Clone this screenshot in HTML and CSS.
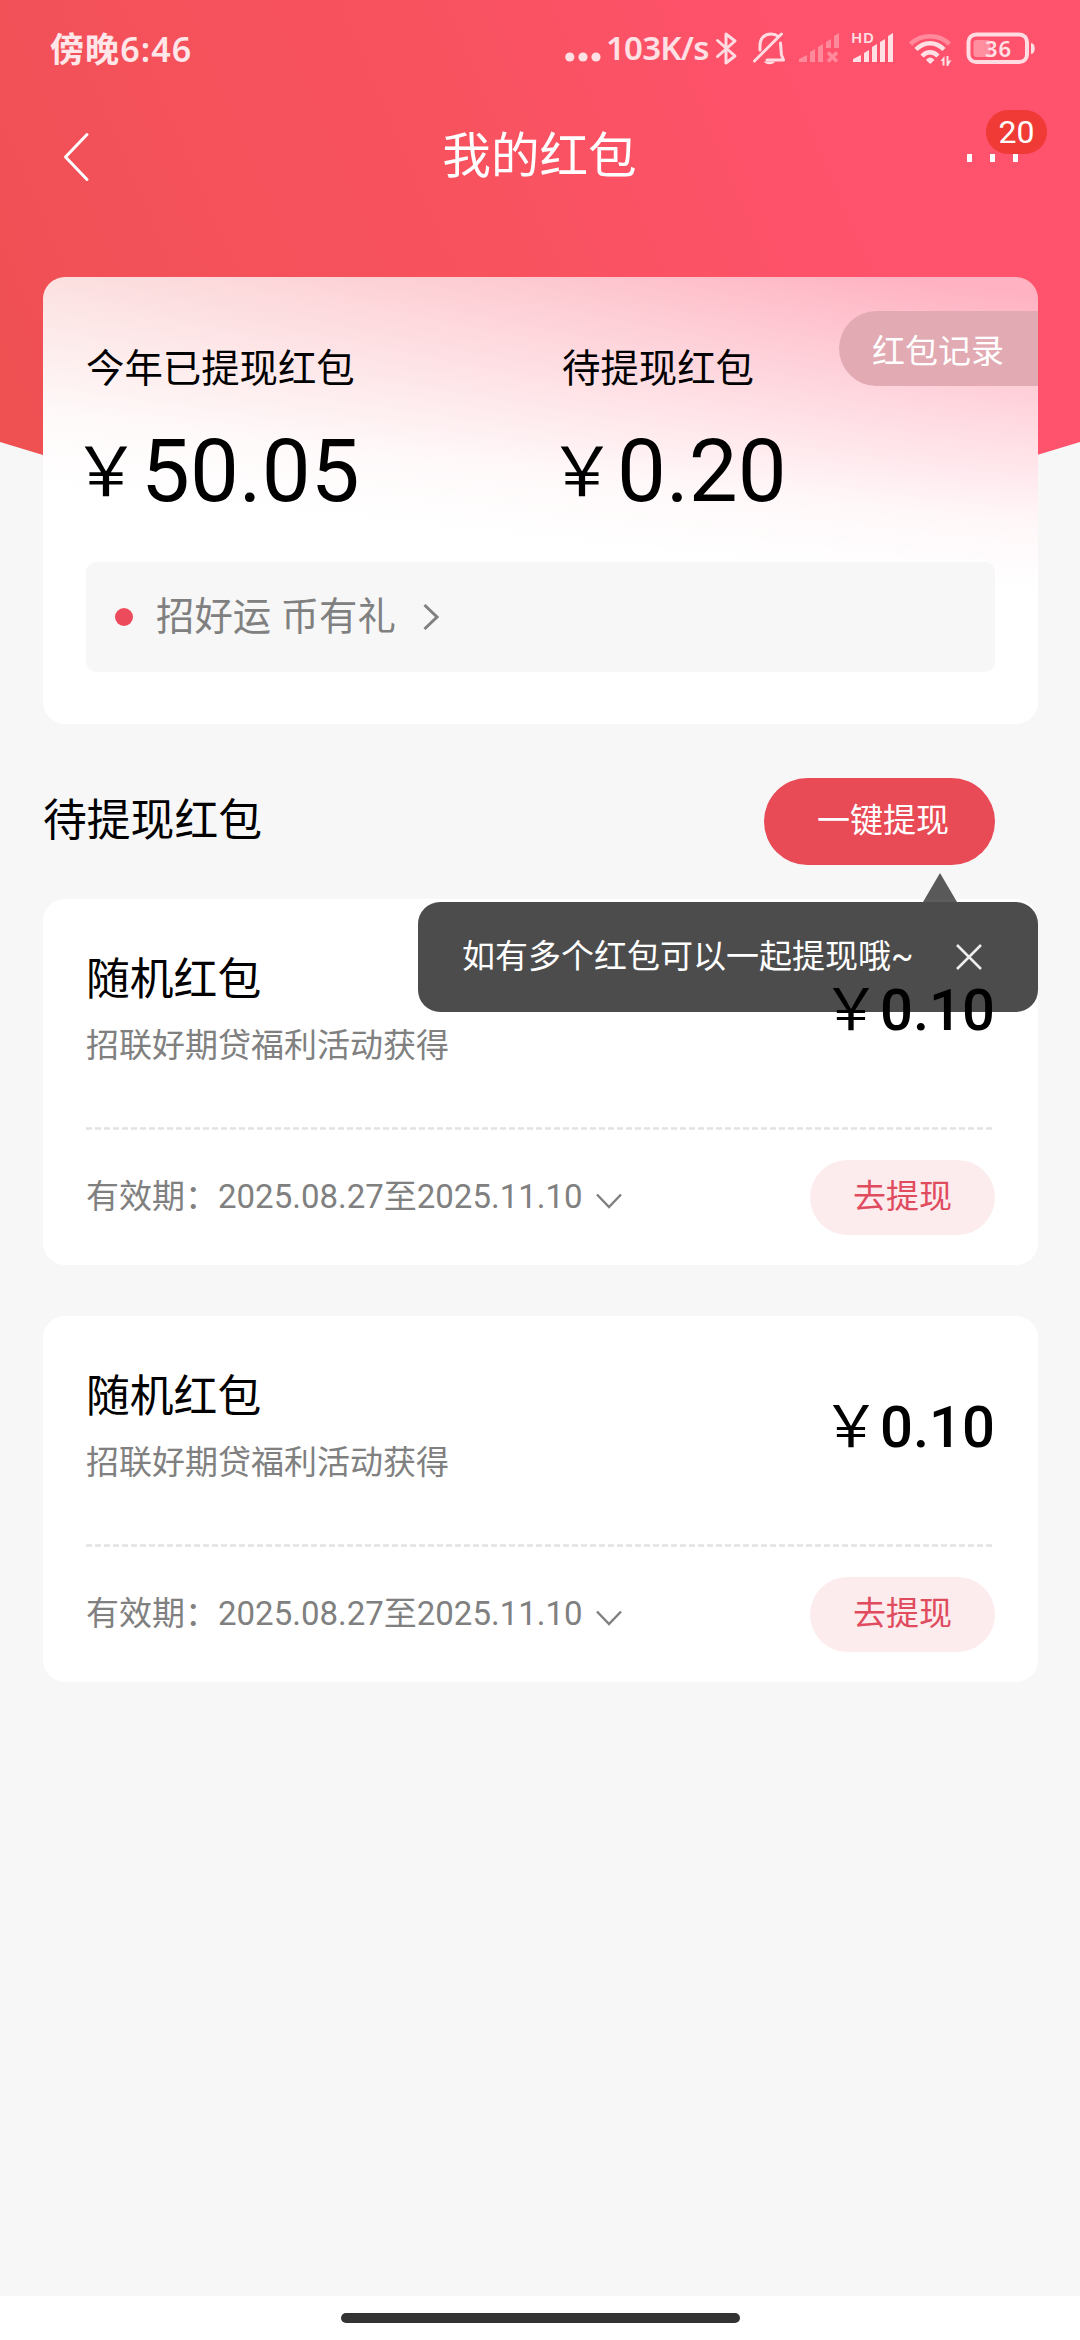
FILE: index.html
```html
<!DOCTYPE html>
<html lang="zh-CN">
<head>
<meta charset="utf-8">
<title>我的红包</title>
<link rel="stylesheet" href="styles.css">
</head>
<body>
<div class="screen">
  <div class="hero-bg"></div>

  <div class="status">
    <span class="time">傍晚6:46</span>
    <div class="status-right">
      <svg class="net-dots" width="37" height="34" viewBox="0 0 37 34"><circle cx="4.8" cy="26" r="4.6"/><circle cx="18" cy="26" r="4.6"/><circle cx="31" cy="26" r="4.6"/></svg>
      <span class="speed">103K/s</span>
      <svg class="tray" width="330" height="40" viewBox="708 28 330 40">
        <g class="line">
          <path d="M717.5 40.5 735 56 726 63V34L735 41 717.5 56.5"/>
          <path d="M760 50V45c0-6 4-11 11-11 3 0 5.500 1 7.500 2.700M780.500 43c.4 5 .6 8 1 12l2 5H767M754.500 61 781.500 34"/>
        </g>
        <path class="solid" d="M764 61.500h11c-1.500 3.500-9.500 3.500-11 0z"/>
        <g class="faint"><path d="M799 62v-3l8-4v7zM810 62V52l5-3v13zM818 62V47l5-3v18zM826 48v-6l5-3v9zM834 48V36l5-3v15z"/><path class="cross" d="M828 52.500l9 9M837 52.500l-9 9"/></g>
        <g class="solid"><path d="M853 62v-3l8-4v7zM864 62V53l5-3v12zM872 62V47l5-3v18zM880 62V42l5-3v23zM888 62V36l5-3v29z"/></g>
        <g class="arc"><path class="dim" d="M910.500 44c11-10.500 28-10.500 39 0"/><path d="M916 49.500c8-8.500 20-8.500 28 0M922 56c5-5 11-5 16 0"/></g>
        <path class="solid" d="M926 60c2.500-3.500 6-3.500 8.500 0l-4.250 4zM940.500 61l4-5v9.500h-2v-4.500zM946.500 56h2v5l3-1-3.500 6h-1.500z"/>
        <rect class="battery" x="968.500" y="34.500" width="58.500" height="27.500" rx="7.500"/>
        <rect class="charge" x="973.500" y="40" width="17" height="17" rx="3"/>
        <path class="solid" d="M1031 43c5 0 5 11 0 11z"/>
        <text class="hd" x="851" y="42.500" textLength="23">HD</text>
        <text class="level" x="985" y="57" textLength="26">36</text>
      </svg>
    </div>
  </div>

  <header class="nav">
    <svg class="back" width="30" height="50" viewBox="0 0 30 50"><path d="M25 2.500 3.500 25 25 47.500"/></svg>
    <h1 class="nav-title">我的红包</h1>
    <div class="more"><i></i><i></i><i></i><span class="badge">20</span></div>
  </header>

  <main class="content">
    <section class="summary">
      <div class="stats">
        <div class="stat"><div class="label">今年已提现红包</div><div class="sum"><span class="yen">￥</span>50.05</div></div>
        <div class="stat"><div class="label">待提现红包</div><div class="sum"><span class="yen">￥</span>0.20</div></div>
      </div>
      <div class="record">红包记录</div>
      <div class="notice">
        <span class="dot"></span><span class="notice-text">招好运 币有礼</span>
        <svg width="18" height="28" viewBox="0 0 18 28"><path d="M2.500 2 15 14 2.500 26"/></svg>
      </div>
    </section>

    <div class="section-head">
      <h2>待提现红包</h2>
      <div class="all-btn">一键提现
        <div class="tip"><span>如有多个红包可以一起提现哦~</span><svg width="26" height="26" viewBox="0 0 26 26"><path d="M1 1 25 25M25 1 1 25"/></svg></div>
      </div>
    </div>

    <article class="card first">
      <div class="card-top">
        <div><div class="name">随机红包</div><div class="source">招联好期贷福利活动获得</div></div>
        <div class="price"><span class="price-yen">￥</span>0.10</div>
      </div>
      <svg class="rule" width="909" height="3" viewBox="0 0 909 3"><path d="M0 1.500H909"/></svg>
      <div class="card-bottom">
        <div class="valid"><span>有效期：2025.08.27至2025.11.10</span><svg width="26" height="16" viewBox="0 0 26 16"><path d="M1 1.500 13 14 25 1.500"/></svg></div>
        <div class="go">去提现</div>
      </div>
    </article>

    <article class="card">
      <div class="card-top">
        <div><div class="name">随机红包</div><div class="source">招联好期贷福利活动获得</div></div>
        <div class="price"><span class="price-yen">￥</span>0.10</div>
      </div>
      <svg class="rule" width="909" height="3" viewBox="0 0 909 3"><path d="M0 1.500H909"/></svg>
      <div class="card-bottom">
        <div class="valid"><span>有效期：2025.08.27至2025.11.10</span><svg width="26" height="16" viewBox="0 0 26 16"><path d="M1 1.500 13 14 25 1.500"/></svg></div>
        <div class="go">去提现</div>
      </div>
    </article>
  </main>

  <footer class="gesture"><div class="handle"></div></footer>
</div>
</body>
</html>
```

FILE: styles.css
```css
* { box-sizing: border-box; }
body { margin: 0; background: #f7f7f7; font-family: Roboto, "Noto Sans CJK SC", sans-serif; color: #000; }
h1, h2 { margin: 0; font-weight: 400; }
svg { display: block; fill: none; flex: none; }

.screen { position: relative; width: 1080px; height: 2340px; display: flex; flex-direction: column; overflow: hidden; isolation: isolate; }
.hero-bg { position: absolute; inset: 0 0 auto; height: 500px; z-index: -1; background: linear-gradient(67deg, #ee5050 0%, #f3515a 20%, #f8525f 48%, #ff526d 78%); clip-path: polygon(0 0, 100% 0, 100% 442px, 1037px 455px, 900px 490px, 180px 490px, 43px 455px, 0 442px); }

.status { height: 96px; padding: 0 42px 0 50px; display: flex; justify-content: space-between; align-items: center; color: #ffe6e8; font-family: "Noto Sans", "Noto Sans CJK SC", sans-serif; font-weight: 600; font-size: 33px; line-height: 40px; }
.time { font-size: 34px; letter-spacing: 1.1px; padding-top: 2px; }
.status-right { display: flex; align-items: center; }
.net-dots { fill: #ffe0e4; margin-right: 4px; }
.speed { width: 102px; white-space: nowrap; color: #ffe0e4; letter-spacing: -.8px; }
.tray .line { stroke: #ffdce2; stroke-width: 3; stroke-linejoin: round; stroke-linecap: round; }
.tray .solid { fill: #ffe0e4; }
.tray .faint { fill: #ff8a9b; }
.tray .cross { stroke: #ff8a9b; stroke-width: 3.5; }
.arc { stroke: #ffe0e4; stroke-width: 4.5; }
.arc .dim { stroke: #ff8a9b; }
.battery { stroke: #ffdce2; stroke-width: 4; }
.charge { fill: #ff8e9f; }
.tray .hd { fill: #ffe0e4; font: 600 15px "Noto Sans", sans-serif; }
.tray .level { fill: #ffe0e4; font: 600 22px "Noto Sans", sans-serif; }

.nav { height: 120px; padding: 2px 42px 0 62px; display: flex; justify-content: space-between; align-items: center; }
.back { stroke: #fff; stroke-width: 3; stroke-linecap: round; stroke-linejoin: round; }
.nav-title { color: #fff; font-size: 48.600px; line-height: 70px; margin-left: 20px; }
.more { position: relative; width: 51px; height: 8px; margin: 2px 20px 0 0; display: flex; justify-content: space-between; }
.more i { width: 5px; height: 8px; background: #fff; }
.badge { position: absolute; left: 19px; top: -44px; width: 61px; height: 44px; border-radius: 22px; background: #f03a35; color: #fff; font-size: 32px; line-height: 45px; text-align: center; }

.content { padding: 61px 42px 0 43px; flex: 1; }
.summary { position: relative; height: 447px; padding: 67px 43px 0; border-radius: 22px; background: linear-gradient(186deg, rgba(255,255,255,0) 3%, rgba(255,255,255,.9) 45%, #fff 57%), linear-gradient(90deg, #fbd0d0 0%, #ffb2c2 90%); }
.stats { display: grid; grid-template-columns: 476px 1fr; height: 218px; }
.label { font-size: 38.400px; line-height: 50px; }
.sum { display: flex; align-items: baseline; font-size: 87px; line-height: 100px; margin-top: 27px; }
.yen { position: relative; top: -5px; font-size: 68px; margin-left: -14px; margin-right: 1px; }
.record { position: absolute; right: 0; top: 34px; width: 199px; height: 75px; padding-left: 33px; border-radius: 38px 0 0 38px; background: #e2aab2; color: #fff; font-size: 33px; line-height: 81px; }
.notice { height: 110px; padding-left: 29px; display: flex; align-items: center; border-radius: 10px; background: #f7f7f7; color: #808080; font-size: 38.400px; }
.notice .dot { width: 18px; height: 18px; margin-right: 23px; border-radius: 50%; background: #ec4b5b; }
.notice-text { padding-bottom: 8px; }
.notice svg { margin-left: 26px; stroke: #808080; stroke-width: 3; }

.section-head { height: 175px; padding: 54px 43px 0 0; display: flex; justify-content: space-between; align-items: flex-start; }
.section-head h2 { font-size: 43.800px; line-height: 86px; }
.all-btn { position: relative; width: 231px; height: 87px; border-radius: 44px; background: #e84a56; color: #fff; font-size: 33px; line-height: 86px; text-align: center; padding-left: 7px; }
.tip { position: absolute; top: 124px; right: -43px; width: 620px; height: 110px; padding: 0 56px 0 44px; display: flex; align-items: center; justify-content: space-between; border-radius: 22px; background: rgba(0,0,0,.7); color: #fff; line-height: 110px; white-space: nowrap; z-index: 2; }
.tip::before { content: ""; position: absolute; right: 81px; top: -29px; border: solid transparent; border-width: 0 17px 29px; border-bottom-color: rgba(0,0,0,.64); }
.tip svg { stroke: #eee; stroke-width: 2.500; }

.card { height: 366px; margin-bottom: 51px; padding: 0 43px; border-radius: 22px; background: #fff; }
.card-top { height: 228px; padding-top: 51px; display: flex; justify-content: space-between; }
.name { font-size: 43.800px; line-height: 60px; }
.source { margin-top: 11px; color: #808080; font-size: 33px; line-height: 50px; }
.price { display: flex; align-items: baseline; height: 70px; font-size: 58px; font-weight: 500; line-height: 70px; margin-top: 25px; }
.price-yen { font-weight: 400; }
.first .price { position: relative; z-index: 3; }
.rule { stroke: #e2e2e2; stroke-width: 2.500; stroke-dasharray: 6 3; }
.card-bottom { height: 135px; display: flex; justify-content: space-between; align-items: center; }
.valid { display: flex; align-items: center; color: #808080; font-size: 33px; }
.valid span { padding-bottom: 7px; }
.valid svg { margin: 7px 0 0 13px; stroke: #808080; stroke-width: 2.500; }
.go { width: 185px; height: 75px; border-radius: 38px; background: #fdecee; color: #e04b5e; font-size: 33px; line-height: 74px; text-align: center; }

.gesture { height: 44px; padding-top: 17px; background: #fff; }
.handle { width: 399px; height: 10px; margin: 0 auto; border-radius: 5px; background: #333; }
```
